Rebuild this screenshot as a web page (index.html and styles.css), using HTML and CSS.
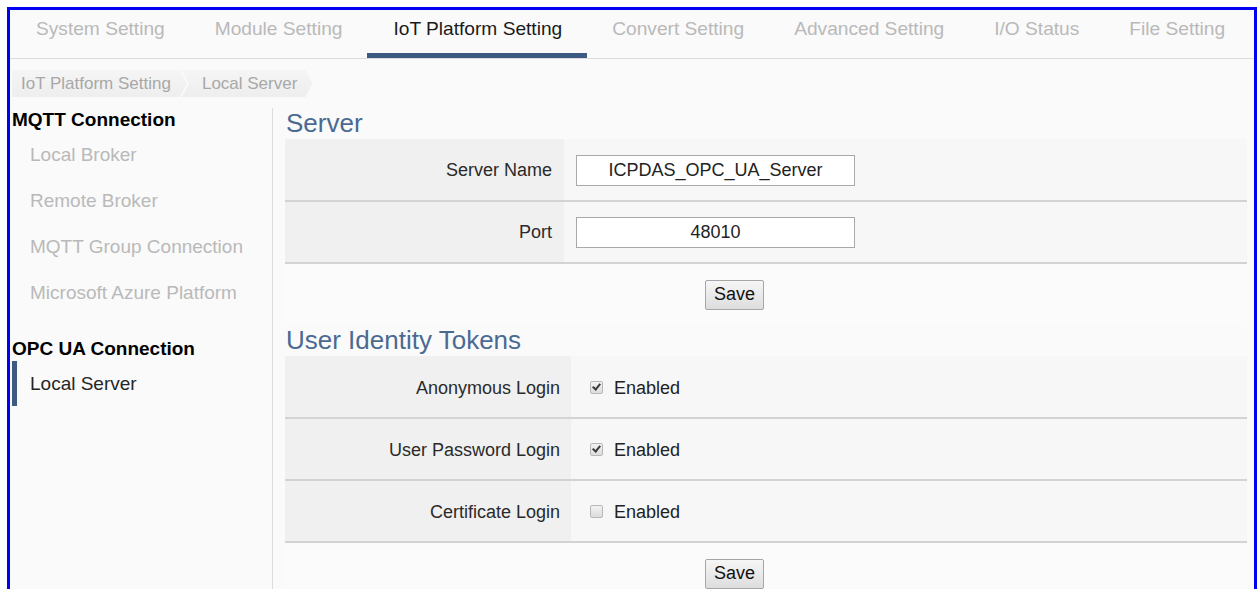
FILE: index.html
```html
<!DOCTYPE html>
<html lang="en">
<head>
<meta charset="utf-8">
<title>IoT Platform Setting - Local Server</title>
<link rel="stylesheet" href="styles.css">
</head>
<body>
<div class="frame">
  <nav class="tabs">
    <a class="tab">System Setting</a>
    <a class="tab">Module Setting</a>
    <a class="tab active">IoT Platform Setting</a>
    <a class="tab">Convert Setting</a>
    <a class="tab">Advanced Setting</a>
    <a class="tab">I/O Status</a>
    <a class="tab">File Setting</a>
  </nav>

  <div class="crumbs">
    <span class="crumb first">IoT Platform Setting</span>
    <span class="crumb">Local Server</span>
  </div>

  <div class="layout">
    <aside class="side">
      <div class="side-head">MQTT Connection</div>
      <a class="side-item">Local Broker</a>
      <a class="side-item">Remote Broker</a>
      <a class="side-item">MQTT Group Connection</a>
      <a class="side-item">Microsoft Azure Platform</a>
      <div class="side-head gap">OPC UA Connection</div>
      <a class="side-item current">Local Server</a>
    </aside>

    <main class="main">
      <h2 class="section-title">Server</h2>
      <table class="form server">
        <tr>
          <th>Server Name</th>
          <td><input class="field" type="text" value="ICPDAS_OPC_UA_Server"></td>
        </tr>
        <tr>
          <th>Port</th>
          <td><input class="field" type="text" value="48010"></td>
        </tr>
        <tr class="actions">
          <td colspan="2"><button class="btn">Save</button></td>
        </tr>
      </table>

      <h2 class="section-title">User Identity Tokens</h2>
      <table class="form tokens">
        <tr>
          <th>Anonymous Login</th>
          <td><label class="check"><span class="box on"></span>Enabled</label></td>
        </tr>
        <tr>
          <th>User Password Login</th>
          <td><label class="check"><span class="box on"></span>Enabled</label></td>
        </tr>
        <tr>
          <th>Certificate Login</th>
          <td><label class="check"><span class="box"></span>Enabled</label></td>
        </tr>
        <tr class="actions">
          <td colspan="2"><button class="btn">Save</button></td>
        </tr>
      </table>
    </main>
  </div>
</div>
</body>
</html>
```

FILE: styles.css
```css
html, body {
  margin: 0;
  padding: 0;
  height: 100%;
  overflow: hidden;
  background: #ffffff;
  font-family: "Liberation Sans", Arial, sans-serif;
}

.frame {
  margin: 7px 0 0 7px;
  width: 1250px;
  height: calc(100vh - 7px);
  box-sizing: border-box;
  border: 3px solid #0000f2;
  border-bottom: none;
  background: #fafafa;
  overflow: hidden;
}

/* top tab bar */
.tabs {
  display: flex;
  height: 48px;
  padding-left: 1px;
  border-bottom: 1px solid #dcdcdc;
}

.tab {
  display: block;
  padding: 0 25px;
  font-size: 19.15px;
  line-height: 38px;
  color: #b9b9b9;
  white-space: nowrap;
}

.tab.active {
  color: #1a1a1a;
  padding-left: 26px;
  box-shadow: inset 0 -5px 0 #3d5b82;
}

/* breadcrumb */
.crumbs {
  display: flex;
  margin: 11px 0 0 2px;
  height: 27px;
}

.crumb {
  display: block;
  font-size: 17px;
  line-height: 27px;
  color: #a8a8a8;
  background: linear-gradient(#f5f5f5, #eeeeee);
  white-space: nowrap;
}

.crumb.first {
  padding: 0 16px 0 9px;
  clip-path: polygon(0 0, calc(100% - 7px) 0, 100% 50%, calc(100% - 7px) 100%, 0 100%);
}

.crumb + .crumb {
  margin-left: -5px;
  padding: 0 15px 0 20px;
  clip-path: polygon(0 0, calc(100% - 7px) 0, 100% 50%, calc(100% - 7px) 100%, 0 100%, 7px 50%);
}

/* two column body */
.layout {
  display: flex;
  margin-top: 11px;
}

.side {
  width: 262px;
  flex: none;
  border-right: 1px solid #dddddd;
  min-height: 500px;
}

.side-head {
  padding-left: 2px;
  font-size: 19px;
  font-weight: bold;
  line-height: 24px;
  color: #000;
}

.side-head.gap {
  margin-top: 21px;
}

.side-item {
  display: block;
  position: relative;
  padding-left: 20px;
  font-size: 19px;
  line-height: 46px;
  color: #b9b9b9;
  white-space: nowrap;
}

.side-item.current {
  color: #262626;
}

.side-item.current::before {
  content: "";
  position: absolute;
  left: 2px;
  top: 0;
  width: 5px;
  height: 45px;
  background: #3d5b82;
}

.main {
  width: 962px;
  margin-left: 12px;
}

.section-title {
  margin: 0;
  padding-left: 1px;
  font-size: 26px;
  font-weight: normal;
  line-height: 31px;
  color: #4a6a92;
}

/* settings tables */
.form {
  width: 100%;
  border-collapse: collapse;
  border-spacing: 0;
}

.form th,
.form td {
  padding: 0;
  height: 62px;
  box-sizing: border-box;
  border-bottom: 2px solid #d3d3d3;
  font-size: 18px;
  font-weight: normal;
  color: #2a2a2a;
}

.form th {
  text-align: right;
  background: #f0f0f0;
}

.form td {
  background: #f7f7f7;
}

.server th {
  width: 279px;
  padding-right: 12px;
  padding-top: 1px;
}

.server td {
  padding-left: 12px;
  padding-top: 1px;
}

.tokens th {
  width: 286px;
  padding-right: 11px;
  padding-top: 3px;
}

.tokens td {
  padding-left: 19px;
  padding-top: 3px;
}

.form tr.actions td {
  height: 62px;
  padding: 0 0 0 420px;
  border-bottom: none;
  background: #fbfbfb;
  text-align: left;
}

.field {
  display: block;
  width: 279px;
  height: 31px;
  box-sizing: border-box;
  border: 1px solid #a9a9a9;
  background: #fff;
  font-family: "Liberation Sans", Arial, sans-serif;
  font-size: 18px;
  color: #222;
  text-align: center;
  padding: 0;
}

.btn {
  width: 59px;
  height: 30px;
  border: 1px solid #a6a6a6;
  border-radius: 2px;
  background: linear-gradient(#f6f6f6, #dddddd);
  font-family: "Liberation Sans", Arial, sans-serif;
  font-size: 18px;
  color: #111;
  padding: 0;
}

.check {
  display: flex;
  align-items: center;
  font-size: 18px;
  color: #222;
}

.box {
  width: 13px;
  height: 13px;
  box-sizing: border-box;
  margin-right: 11px;
  border: 1px solid #b8b8b8;
  border-radius: 2px;
  background: linear-gradient(#f2f2f2, #dcdcdc);
  position: relative;
  top: -1px;
}

.box.on::after {
  content: "";
  position: absolute;
  left: 3px;
  top: 0px;
  width: 3px;
  height: 6px;
  border: solid #3a3a3a;
  border-width: 0 2px 2px 0;
  transform: rotate(40deg);
}
```
